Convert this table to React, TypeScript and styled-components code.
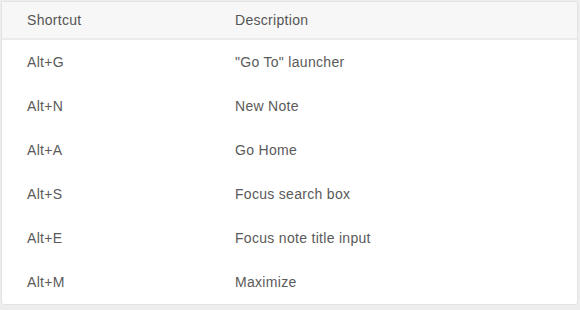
import styled, { createGlobalStyle } from "styled-components";

const GlobalStyle = createGlobalStyle`
  html, body {
    margin: 0;
    padding: 0;
    background: #ededed;
  }
  body {
    font-family: "Liberation Sans", Arial, sans-serif;
  }
`;

const Card = styled.div`
  box-sizing: border-box;
  width: 577px;
  margin: 1px 0 0 1px;
  background: #fff;
  border: 1px solid #e3e3e3;
  border-radius: 3px;
  overflow: hidden;
`;

const Table = styled.table`
  width: 100%;
  table-layout: fixed;
  border-collapse: collapse;
  font-size: 14px;
  letter-spacing: 0.3px;
  color: #5a5a5a;
`;

const HeadRow = styled.tr`
  background: #f7f7f7;
  border-bottom: 2px solid #ebebeb;
`;

const HeadCell = styled.th<{ $w?: number }>`
  box-sizing: border-box;
  height: 37px;
  padding: 0 0 0 25px;
  text-align: left;
  font-weight: normal;
  color: #555;
  width: ${(p) => (p.$w ? `${p.$w}px` : "auto")};
`;

const Cell = styled.td`
  height: 44px;
  padding: 0 0 0 25px;
  vertical-align: middle;
`;

const shortcuts = [
  ["Alt+G", '"Go To" launcher'],
  ["Alt+N", "New Note"],
  ["Alt+A", "Go Home"],
  ["Alt+S", "Focus search box"],
  ["Alt+E", "Focus note title input"],
  ["Alt+M", "Maximize"],
];

function App() {
  return (
    <>
      <GlobalStyle />
      <Card>
        <Table>
          <thead>
            <HeadRow>
              <HeadCell $w={208}>Shortcut</HeadCell>
              <HeadCell>Description</HeadCell>
            </HeadRow>
          </thead>
          <tbody>
            {shortcuts.map(([key, desc]) => (
              <tr key={key}>
                <Cell>{key}</Cell>
                <Cell>{desc}</Cell>
              </tr>
            ))}
          </tbody>
        </Table>
      </Card>
    </>
  );
}

export default App;
